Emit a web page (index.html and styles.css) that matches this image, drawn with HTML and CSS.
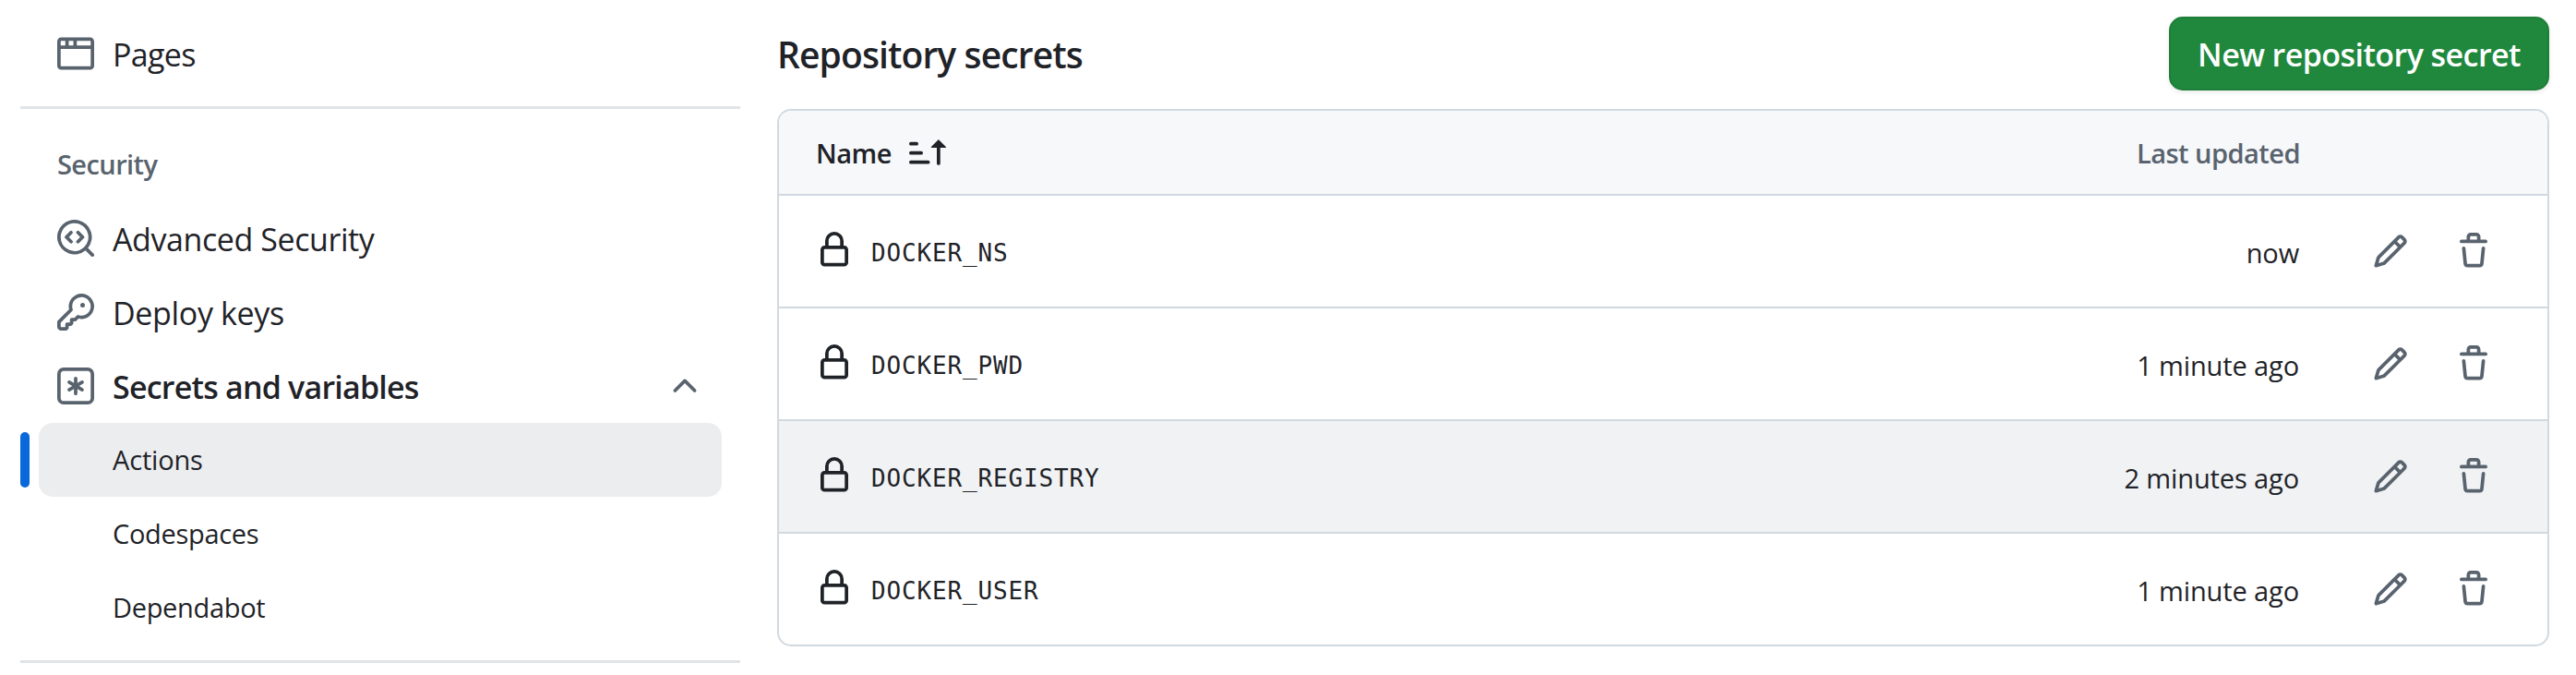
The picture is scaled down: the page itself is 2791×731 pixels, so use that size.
FILE: index.html
```html
<!DOCTYPE html>
<html lang="en">
<head>
<meta charset="utf-8">
<title>Actions secrets</title>
<link rel="stylesheet" href="styles.css">
</head>
<body>
<svg class="sprite" aria-hidden="true">
  <symbol id="i-lock" viewBox="0 0 16 16"><path d="M4 4a4 4 0 0 1 8 0v2h.25c.966 0 1.75.784 1.75 1.75v5.5A1.75 1.75 0 0 1 12.25 15h-8.5A1.75 1.75 0 0 1 2 13.25v-5.5C2 6.784 2.784 6 3.75 6H4Zm8.25 3.5h-8.5a.25.25 0 0 0-.25.25v5.5c0 .138.112.25.25.25h8.5a.25.25 0 0 0 .25-.25v-5.5a.25.25 0 0 0-.25-.25ZM10.5 6V4a2.5 2.5 0 1 0-5 0v2Z"/></symbol>
  <symbol id="i-pencil" viewBox="0 0 16 16"><path d="M11.013 1.427a1.75 1.75 0 0 1 2.474 0l1.086 1.086a1.75 1.75 0 0 1 0 2.474l-8.61 8.61c-.21.21-.47.364-.756.445l-3.251.93a.75.75 0 0 1-.927-.928l.929-3.25c.081-.286.235-.547.445-.758l8.61-8.61Zm.176 4.823L9.75 4.81l-6.286 6.287a.253.253 0 0 0-.064.108l-.558 1.953 1.953-.558a.253.253 0 0 0 .108-.064Zm1.238-3.763a.25.25 0 0 0-.354 0L10.811 3.75l1.439 1.44 1.263-1.263a.25.25 0 0 0 0-.354Z"/></symbol>
  <symbol id="i-trash" viewBox="0 0 16 16"><path d="M11 1.75V3h2.25a.75.75 0 0 1 0 1.5H2.75a.75.75 0 0 1 0-1.5H5V1.75C5 .784 5.784 0 6.75 0h2.5C10.216 0 11 .784 11 1.75ZM4.496 6.675l.66 6.6a.25.25 0 0 0 .249.225h5.19a.25.25 0 0 0 .249-.225l.66-6.6a.75.75 0 0 1 1.492.149l-.66 6.6A1.748 1.748 0 0 1 10.595 15h-5.19a1.75 1.75 0 0 1-1.741-1.575l-.66-6.6a.75.75 0 1 1 1.492-.15ZM6.5 1.75V3h3V1.75a.25.25 0 0 0-.25-.25h-2.5a.25.25 0 0 0-.25.25Z"/></symbol>
</svg>
<div class="page">
  <nav class="sidebar">
    <a class="item pages"><svg class="icon" viewBox="0 0 16 16"><path d="M0 2.75C0 1.784.784 1 1.75 1h12.5c.966 0 1.75.784 1.75 1.75v10.5A1.75 1.75 0 0 1 14.25 15H1.75A1.75 1.75 0 0 1 0 13.25ZM14.5 6h-13v7.25c0 .138.112.25.25.25h12.5a.25.25 0 0 0 .25-.25Zm-6-3.5v2h6V2.75a.25.25 0 0 0-.25-.25ZM5 2.5v2h2v-2Zm-3.25 0a.25.25 0 0 0-.25.25V4.5h2v-2Z"/></svg><span>Pages</span></a>
    <hr class="divider">
    <h3 class="group">Security</h3>
    <a class="item"><svg class="icon" viewBox="0 0 16 16"><path d="M8.47 4.97a.75.75 0 0 0 0 1.06L9.94 7.5 8.47 8.97a.75.75 0 1 0 1.06 1.06l2-2a.75.75 0 0 0 0-1.06l-2-2a.75.75 0 0 0-1.06 0ZM6.53 6.03a.75.75 0 0 0-1.06-1.06l-2 2a.75.75 0 0 0 0 1.06l2 2a.75.75 0 1 0 1.06-1.06L5.06 7.5l1.47-1.47Z"/><path d="M12.246 13.307a7.501 7.501 0 1 1 1.06-1.06l2.474 2.473a.749.749 0 1 1-1.06 1.06ZM1.5 7.5a6.002 6.002 0 0 0 3.608 5.504 6.002 6.002 0 0 0 6.486-1.117.748.748 0 0 1 .292-.293A6 6 0 1 0 1.5 7.5Z"/></svg><span>Advanced Security</span></a>
    <a class="item keys"><svg class="icon" viewBox="0 0 16 16"><path d="M10.5 0a5.499 5.499 0 1 1-1.288 10.848l-.932.932a.749.749 0 0 1-.53.22H7v.75a.749.749 0 0 1-.22.53l-.5.5a.749.749 0 0 1-.53.22H5v.75a.749.749 0 0 1-.22.53l-.5.5a.749.749 0 0 1-.53.22h-2A1.75 1.75 0 0 1 0 14.25v-2c0-.199.079-.389.22-.53l4.932-4.932A5.5 5.5 0 0 1 10.5 0Zm-4 5.5c-.001.431.069.86.205 1.269a.75.75 0 0 1-.181.768L1.5 12.56v1.69c0 .138.112.25.25.25h1.69l.06-.06v-1.19a.75.75 0 0 1 .75-.75h1.19l.06-.06v-1.19a.75.75 0 0 1 .75-.75h1.19l1.023-1.025a.75.75 0 0 1 .768-.18A4 4 0 1 0 6.5 5.5ZM11 6a1 1 0 1 1 0-2 1 1 0 0 1 0 2Z"/></svg><span>Deploy keys</span></a>
    <a class="item open"><svg class="icon" viewBox="0 0 16 16"><path d="M0 2.75A2.75 2.75 0 0 1 2.75 0h10.5A2.75 2.75 0 0 1 16 2.75v10.5A2.75 2.75 0 0 1 13.25 16H2.75A2.75 2.75 0 0 1 0 13.25ZM2.75 1.5c-.69 0-1.25.56-1.25 1.25v10.5c0 .69.56 1.25 1.25 1.25h10.5c.69 0 1.25-.56 1.25-1.25V2.75c0-.69-.56-1.25-1.25-1.25Z"/><path d="M8 4a.75.75 0 0 1 .75.75V6.7l1.69-.975a.75.75 0 0 1 .75 1.3L9.5 8l1.69.976a.75.75 0 0 1-.75 1.298L8.75 9.3v1.951a.75.75 0 0 1-1.5 0V9.299l-1.69.976a.75.75 0 0 1-.75-1.3L6.5 8l-1.69-.975a.75.75 0 0 1 .75-1.3l1.69.976V4.75A.75.75 0 0 1 8 4Z"/></svg><span>Secrets and variables</span><svg class="icon chevron" viewBox="0 0 16 16"><path d="M3.22 10.53a.749.749 0 0 1 0-1.06l4.25-4.25a.749.749 0 0 1 1.06 0l4.25 4.25a.749.749 0 1 1-1.06 1.06L8 6.811 4.28 10.53a.749.749 0 0 1-1.06 0Z"/></svg></a>
    <a class="sub current"><span>Actions</span></a>
    <a class="sub"><span>Codespaces</span></a>
    <a class="sub"><span>Dependabot</span></a>
    <hr class="divider last">
  </nav>
  <main class="main">
    <header class="head">
      <h2 class="title">Repository secrets</h2>
      <button class="btn">New repository secret</button>
    </header>
    <section class="table">
      <div class="row thead">
        <span class="name">Name</span>
        <svg class="icon sort" viewBox="0 0 16 16"><path d="m12.927 2.573 3 3A.25.25 0 0 1 15.75 6H13.5v6.75a.75.75 0 0 1-1.5 0V6H9.75a.25.25 0 0 1-.177-.427l3-3a.25.25 0 0 1 .354 0ZM0 12.25a.75.75 0 0 1 .75-.75h7.5a.75.75 0 0 1 0 1.5H.75a.75.75 0 0 1-.75-.75Zm0-4a.75.75 0 0 1 .75-.75h4.5a.75.75 0 0 1 0 1.5h-4.5A.75.75 0 0 1 0 8.25Zm0-4a.75.75 0 0 1 .75-.75h2.5a.75.75 0 0 1 0 1.5H.75A.75.75 0 0 1 0 4.25Z"/></svg>
        <span class="updated">Last updated</span>
      </div>
      <div class="row">
        <svg class="icon lock"><use href="#i-lock"/></svg><code class="secret">DOCKER_NS</code>
        <span class="updated">now</span>
        <svg class="icon edit"><use href="#i-pencil"/></svg><svg class="icon trash"><use href="#i-trash"/></svg>
      </div>
      <div class="row">
        <svg class="icon lock"><use href="#i-lock"/></svg><code class="secret">DOCKER_PWD</code>
        <span class="updated">1 minute ago</span>
        <svg class="icon edit"><use href="#i-pencil"/></svg><svg class="icon trash"><use href="#i-trash"/></svg>
      </div>
      <div class="row hover">
        <svg class="icon lock"><use href="#i-lock"/></svg><code class="secret">DOCKER_REGISTRY</code>
        <span class="updated">2 minutes ago</span>
        <svg class="icon edit"><use href="#i-pencil"/></svg><svg class="icon trash"><use href="#i-trash"/></svg>
      </div>
      <div class="row">
        <svg class="icon lock"><use href="#i-lock"/></svg><code class="secret">DOCKER_USER</code>
        <span class="updated">1 minute ago</span>
        <svg class="icon edit"><use href="#i-pencil"/></svg><svg class="icon trash"><use href="#i-trash"/></svg>
      </div>
    </section>
  </main>
</div>
</body>
</html>
```
FILE: styles.css
```css
* { box-sizing: border-box; }

body {
  margin: 0;
  background: #fff;
  color: #1f2328;
  font-family: "Open Sans", "Noto Sans", sans-serif;
  overflow: hidden;
}

.sprite { display: none; }

.page {
  display: flex;
  gap: 40px;
  height: 731px;
  padding: 18px 29px 0 22px;
}

.icon {
  flex: none;
  display: block;
  width: 40px;
  height: 40px;
  fill: #59636e;
}

/* Sidebar */
.sidebar { flex: none; width: 780px; }

.item {
  display: flex;
  align-items: center;
  gap: 20px;
  height: 80px;
  padding: 0 40px;
  font-size: 34px;
  letter-spacing: -0.42px;
}

.item span { padding-top: 2px; }
.item.pages { letter-spacing: -0.65px; }
.item.keys { letter-spacing: -0.34px; }
.item.open { font-weight: 600; letter-spacing: -0.79px; }
.chevron { margin-left: auto; }

.divider {
  height: 3px;
  margin: 17px 0 0;
  border: 0;
  background: #dfe4e8;
}

.group {
  height: 60px;
  margin: 30px 0 10px;
  padding-left: 40px;
  font-size: 29px;
  line-height: 60px;
  font-weight: 600;
  letter-spacing: -0.58px;
  color: #59636e;
}

.sub {
  position: relative;
  display: flex;
  align-items: center;
  height: 80px;
  margin: 0 20px;
  padding: 0 0 2px 80px;
  border-radius: 15px;
  font-size: 29px;
  letter-spacing: -0.32px;
}

.sub.current {
  background: #ecedef;
  letter-spacing: -0.17px;
}

.sub.current::before {
  content: "";
  position: absolute;
  left: -20px;
  top: 10px;
  width: 10px;
  height: 60px;
  border-radius: 5px;
  background: #0969da;
}

/* Main column */
.main { flex: 1; }

.head {
  display: flex;
  align-items: center;
  justify-content: space-between;
  height: 80px;
  margin-bottom: 20px;
}

.title {
  margin: 0;
  padding-top: 2px;
  font-size: 39px;
  line-height: 60px;
  font-weight: 600;
  letter-spacing: -0.89px;
}

.btn {
  width: 412px;
  height: 80px;
  padding: 2px 0 0;
  border: 2px solid #1f7e38;
  border-radius: 15px;
  background: #1f883d;
  box-shadow: 0 2px 5px rgba(31, 35, 40, 0.1);
  color: #fff;
  font: 600 34px "Open Sans", "Noto Sans", sans-serif;
  letter-spacing: -0.56px;
}

.table {
  border: 2px solid #d1d9e0;
  border-radius: 15px;
  overflow: hidden;
}

.row {
  display: flex;
  align-items: center;
  height: 122px;
  padding: 0 60px 0 40px;
  border-bottom: 2px solid #d1d9e0;
}

.row:last-child { height: 120px; border-bottom: 0; }
.row.hover { background: #f0f2f4; }

.thead {
  height: 92px;
  background: #f6f8fa;
  font-size: 29px;
  font-weight: 600;
  letter-spacing: -0.47px;
}

.name { width: 101px; }
.sort { fill: #1f2328; }
.lock { margin-bottom: 2px; fill: #1f2328; }

.secret {
  margin-left: 20px;
  padding-top: 3px;
  font: 26px "DejaVu Sans Mono", monospace;
  letter-spacing: 0.85px;
}

.updated {
  margin-left: auto;
  padding-top: 2px;
  font-size: 29px;
  letter-spacing: -0.12px;
}

.thead .updated {
  margin-right: 208px;
  padding-top: 0;
  color: #59636e;
  letter-spacing: -0.52px;
}

.edit { margin-left: 79px; }
.trash { margin-left: 50px; }
```
